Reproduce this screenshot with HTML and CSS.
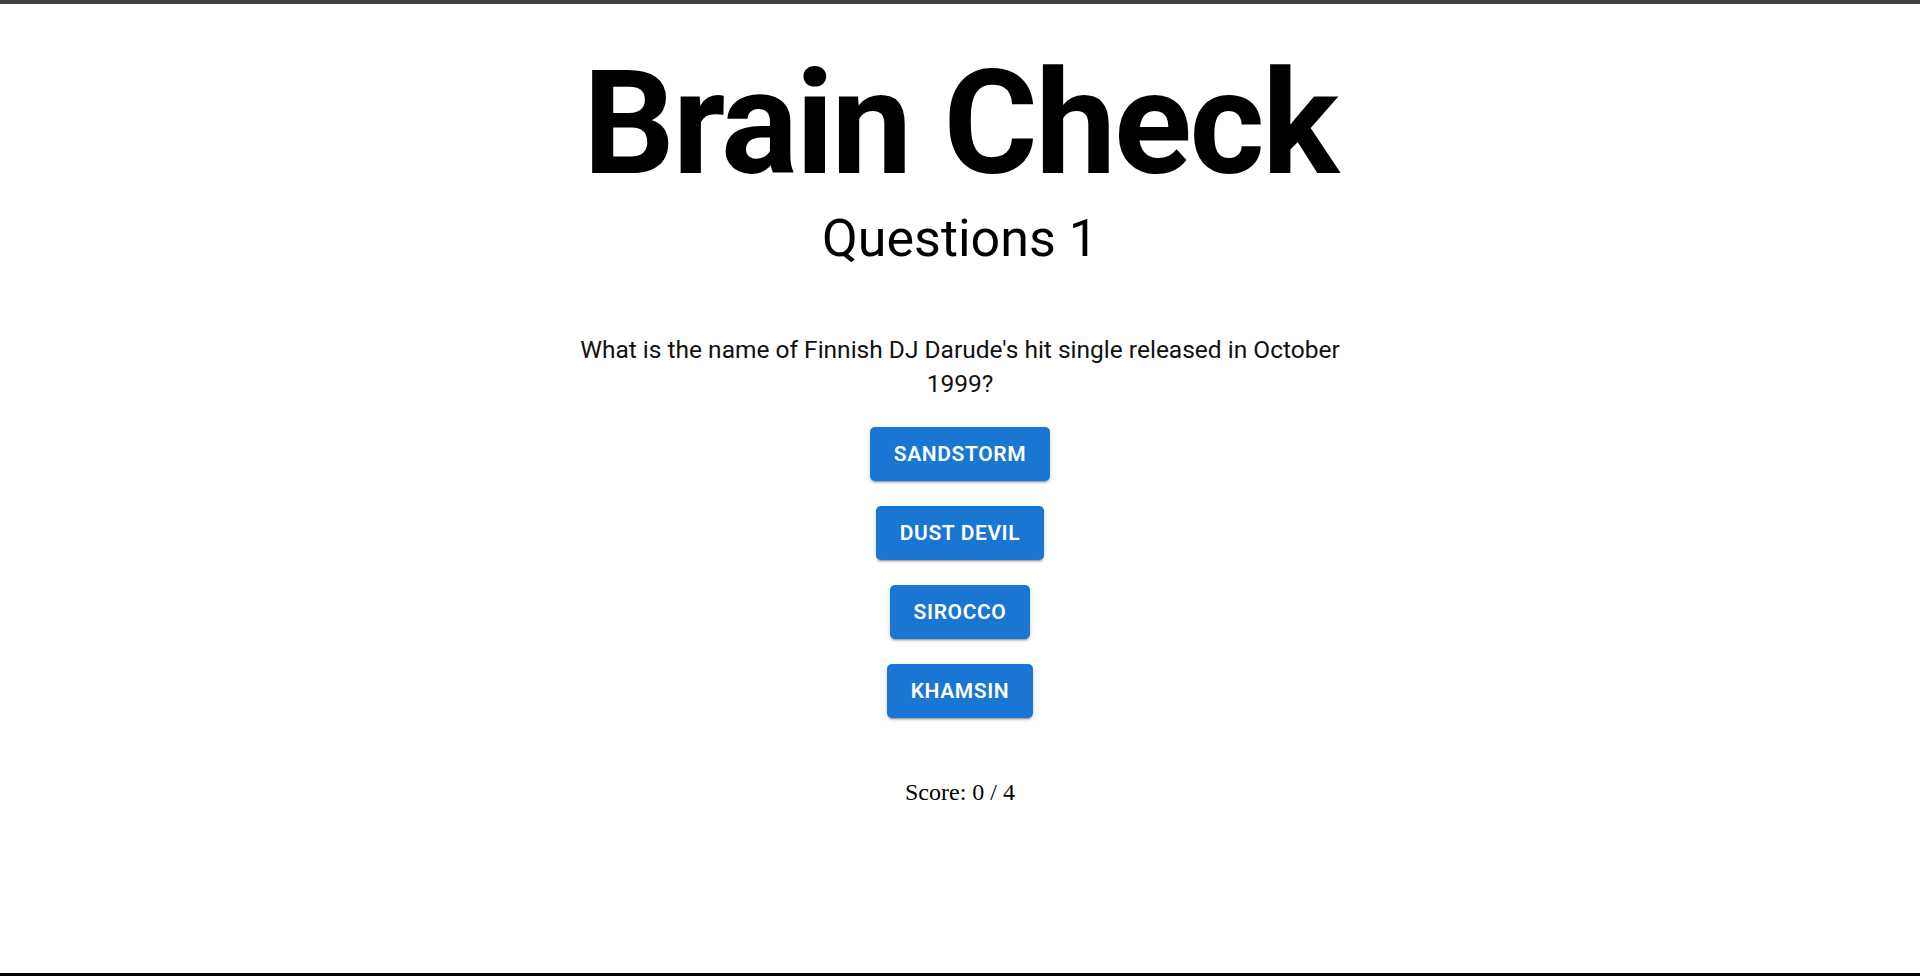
FILE: index.html
```html
<!DOCTYPE html>
<html lang="en">
<head>
<meta charset="utf-8">
<title>Brain Check</title>
<link rel="stylesheet" href="styles.css">
</head>
<body>
<div class="page">
  <div class="top-bar"></div>
  <main class="quiz">
    <h1 class="title">Brain Check</h1>
    <h2 class="subtitle">Questions 1</h2>
    <p class="question">What is the name of Finnish DJ Darude's hit single released in October 1999?</p>
    <div class="answers">
      <button class="answer">Sandstorm</button>
      <button class="answer">Dust Devil</button>
      <button class="answer">Sirocco</button>
      <button class="answer">Khamsin</button>
    </div>
    <p class="score">Score: 0 / 4</p>
  </main>
  <div class="bottom-bar"></div>
</div>
</body>
</html>
```

FILE: styles.css
```css
html, body {
  margin: 0;
  padding: 0;
  background: #fff;
}

.page {
  min-height: 100vh;
  display: flex;
  flex-direction: column;
}

.top-bar {
  height: 4px;
  background: #404040;
  flex: none;
}

.bottom-bar {
  height: 3px;
  background: #000;
  flex: none;
}

.quiz {
  flex: 1;
  display: flex;
  flex-direction: column;
  align-items: center;
  font-family: Roboto, "Liberation Sans", sans-serif;
  color: #000;
}

.title {
  margin: 48px 0 0;
  font-size: 144px;
  line-height: 144px;
  font-weight: 700;
  letter-spacing: -0.01562em;
}

.subtitle {
  margin: 17px 0 0;
  font-size: 52px;
  line-height: 52px;
  font-weight: 400;
}

.question {
  margin: 68px 0 0;
  max-width: 800px;
  text-align: center;
  font-size: 24.5px;
  line-height: 34px;
  color: #111;
}

.answers {
  margin-top: 26px;
  display: flex;
  flex-direction: column;
  align-items: center;
  gap: 25px;
}

.answer {
  font-family: Roboto, "Liberation Sans", sans-serif;
  font-size: 21px;
  font-weight: 600;
  line-height: 34px;
  letter-spacing: 0.02857em;
  text-transform: uppercase;
  color: #fff;
  background: #1976d2;
  border: none;
  border-radius: 5px;
  padding: 10px 24px;
  cursor: pointer;
  box-shadow: 0px 3px 1px -2px rgba(0,0,0,0.2), 0px 2px 2px 0px rgba(0,0,0,0.14), 0px 1px 5px 0px rgba(0,0,0,0.12);
}

.score {
  margin: 60px 0 0;
  font-family: "Liberation Serif", serif;
  font-size: 24px;
  line-height: 28px;
  color: #000;
}
```
